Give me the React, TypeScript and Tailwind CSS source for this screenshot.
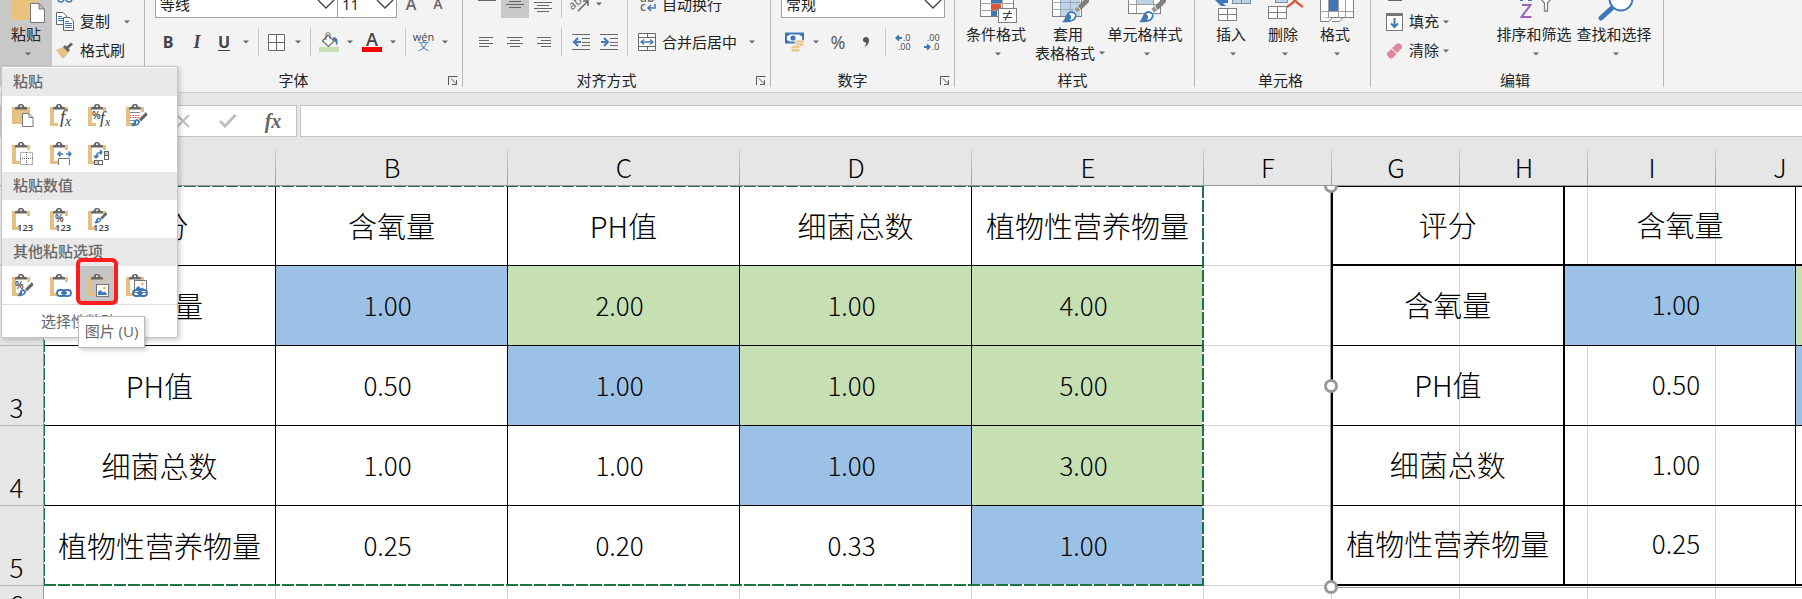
import type { ReactNode } from 'react';
import clsx from 'clsx';

type Fill = 'none' | 'blue' | 'green';

const fills: Record<Fill, string> = {
  none: '',
  blue: 'bg-[#9bc2e6]',
  green: 'bg-[#c6e0b4]',
};

const columns = ['A', 'B', 'C', 'D', 'E', 'F', 'G', 'H', 'I', 'J'];

const rows: { text: string; fill: Fill }[][] = [
  [
    { text: '评分', fill: 'none' },
    { text: '含氧量', fill: 'none' },
    { text: 'PH值', fill: 'none' },
    { text: '细菌总数', fill: 'none' },
    { text: '植物性营养物量', fill: 'none' },
  ],
  [
    { text: '含氧量', fill: 'none' },
    { text: '1.00', fill: 'blue' },
    { text: '2.00', fill: 'green' },
    { text: '1.00', fill: 'green' },
    { text: '4.00', fill: 'green' },
  ],
  [
    { text: 'PH值', fill: 'none' },
    { text: '0.50', fill: 'none' },
    { text: '1.00', fill: 'blue' },
    { text: '1.00', fill: 'green' },
    { text: '5.00', fill: 'green' },
  ],
  [
    { text: '细菌总数', fill: 'none' },
    { text: '1.00', fill: 'none' },
    { text: '1.00', fill: 'none' },
    { text: '1.00', fill: 'blue' },
    { text: '3.00', fill: 'green' },
  ],
  [
    { text: '植物性营养物量', fill: 'none' },
    { text: '0.25', fill: 'none' },
    { text: '0.20', fill: 'none' },
    { text: '0.33', fill: 'none' },
    { text: '1.00', fill: 'blue' },
  ],
];

const isNumber = (text: string) => /^\d/.test(text);

/* ---------- small shared pieces ---------- */

function Caret({ className }: { className?: string }) {
  return (
    <svg width="6" height="4" viewBox="0 0 6 4" className={clsx('shrink-0', className)}>
      <path d="M0 0.5H6L3 3.5Z" fill="#666" />
    </svg>
  );
}

function Sep({ className }: { className?: string }) {
  return <div className={clsx('w-px h-7 shrink-0 bg-[#c8c8c8]', className)}></div>;
}

function Tool({ label, className, children }: { label: string; className: string; children: ReactNode }) {
  return (
    <button aria-label={label} className={clsx('h-7 shrink-0 flex items-center justify-center', className)}>
      {children}
    </button>
  );
}

function Launcher() {
  return (
    <button aria-label="更多设置" className="shrink-0">
      <svg width="10" height="9" viewBox="0 0 10 9" fill="none" stroke="#555">
        <path d="M0.5 9V0.5H9.5M3 2.5L8 7.5M8.5 4V8.5H4" />
      </svg>
    </button>
  );
}

function Group({ label, launcher, className, children }: { label: string; launcher?: boolean; className: string; children: ReactNode }) {
  return (
    <section className={clsx('h-[87px] shrink-0 flex flex-col justify-between border-r border-[#b8b8b8]', className)}>
      {children}
      <div className="flex items-center pr-1 leading-3.5">
        <span className={clsx('flex-1 text-center', launcher && 'pr-1.5')}>{label}</span>
        {launcher && <Launcher />}
      </div>
    </section>
  );
}

function Combo({ label, value, className }: { label: string; value: string; className: string }) {
  return (
    <label className={clsx('relative block h-7 shrink-0', className)}>
      <select aria-label={label} className="w-full h-7 appearance-none bg-white border border-[#a0a0a0] pl-1 leading-6">
        <option>{value}</option>
      </select>
      <svg width="18" height="10" viewBox="0 0 18 10" fill="none" stroke="#444" strokeWidth="1.4" className="absolute right-[3px] top-[9px] pointer-events-none">
        <path d="M1 1L9 9L17 1" />
      </svg>
    </label>
  );
}

function BigButton({ icon, lines, className }: { icon: ReactNode; lines: string[]; className: string }) {
  return (
    <button className={clsx('h-[62px] shrink-0 flex flex-col items-center whitespace-nowrap', className)}>
      <span className="h-6 pl-1">{icon}</span>
      <span className="leading-5">{lines[0]}</span>
      {lines[1] ? (
        <span className="flex items-center gap-1 leading-4.5 pl-1">{lines[1]}<Caret /></span>
      ) : (
        <Caret className="mt-2 ml-1" />
      )}
    </button>
  );
}

/* ---------- ribbon icons ---------- */

function Lines({ rows: list, width = 18 }: { rows: [number, number, number][]; width?: number }) {
  return (
    <svg width={width} height="20" viewBox={`0 0 ${width} 20`} stroke="#666">
      {list.map(([x1, x2, y]) => <path key={y} d={`M${x1} ${y}.5H${x2}`} />)}
    </svg>
  );
}

function Brush({ transform }: { transform?: string }) {
  return (
    <g transform={transform}>
      <path d="M25 -3L16 6L19 10L29 0Z" fill="#7f7f7f" />
      <path d="M15 6L12 9L15 13L19 10Z" fill="#9a9a9a" stroke="#fff" strokeWidth="0.6" />
      <path d="M0 22C4 20 3 12 9 11C13 11 16 15 14 18C12 22 6 23 0 22Z" fill="#3f78b5" />
      <path d="M7 14C9 12 12 13 13 15C13 18 10 20 8 20C10 17 9 15 7 14Z" fill="#fff" />
    </g>
  );
}

function SmallBrush({ transform }: { transform: string }) {
  return (
    <g transform={transform}>
      <path d="M15 0L8 7L10 9.500L16.500 3Z" fill="#666" />
      <path d="M0 14C3 12 2 8 6 7C9 8 10 10 8 12C6 14 3 14.500 0 14Z" fill="#3f78b5" />
      <path d="M5 9L7 9.500L6.500 11.500L5 12Z" fill="#fff" />
    </g>
  );
}

function ConditionalIcon() {
  return (
    <svg width="37" height="23" viewBox="0 0 37 23">
      <rect x="0.5" y="-4" width="33" height="20.5" fill="#fff" stroke="#7f7f7f" />
      <path d="M0 3.5H33M0 10.5H33M11.5 0V16M22.5 0V16" stroke="#a0a0a0" />
      <rect x="11" y="0" width="11" height="3" fill="#3f78b5" />
      <rect x="11" y="4" width="10" height="6" fill="#d9593a" />
      <rect x="11" y="11" width="6" height="5" fill="#3f78b5" />
      <rect x="18.500" y="8.500" width="18" height="14" fill="#fff" stroke="#7f7f7f" />
      <path d="M23 13.500H32M23 17.500H32M30 10.500L25 20.500" stroke="#444" strokeWidth="1.200" />
    </svg>
  );
}

function TableStyleIcon() {
  return (
    <svg width="37" height="23" viewBox="0 0 37 23">
      <rect x="0.5" y="-4" width="29" height="20.500" fill="#fff" stroke="#7f7f7f" />
      <rect x="9" y="0" width="19" height="16" fill="#bcd3e8" />
      <path d="M0 2.500H29M0 9.500H29M8.500 0V16M18.500 0V16" stroke="#9aa9b8" />
      <Brush transform="translate(10 0)" />
    </svg>
  );
}

function CellStyleIcon() {
  return (
    <svg width="38" height="23" viewBox="0 0 38 23">
      <rect x="0.5" y="-4" width="32" height="17.500" fill="#fff" stroke="#7f7f7f" />
      <path d="M0 4.500H32M8.500 0V13M25.500 0V13" stroke="#a0a0a0" />
      <rect x="9" y="0" width="16" height="4" fill="#bcd3e8" />
      <Brush transform="translate(11 0)" />
    </svg>
  );
}

function InsertIcon() {
  return (
    <svg width="37" height="21" viewBox="0 0 37 21">
      <path d="M0 0H13V3H8L11 6H6Z" fill="#3f78b5" />
      <rect x="17.500" y="-4" width="18" height="7.500" fill="#bcd3e8" stroke="#7f8f9f" />
      <path d="M26.500 0V3" stroke="#7f8f9f" />
      <rect x="3.500" y="8.500" width="18" height="12" fill="#fff" stroke="#7f7f7f" />
      <path d="M12.500 8V20M3 14.500H22" stroke="#7f7f7f" />
    </svg>
  );
}

function DeleteIcon() {
  return (
    <svg width="37" height="21" viewBox="0 0 37 21">
      <rect x="8.500" y="-4" width="12" height="6.500" fill="#bcd3e8" stroke="#7f8f9f" />
      <path d="M20 7C25 4 29 0 32 -4M24 -4C27 0 31 4 36 7" fill="none" stroke="#d9593a" strokeWidth="2.400" />
      <rect x="1.500" y="6.500" width="18" height="12" fill="#fff" stroke="#7f7f7f" />
      <path d="M10.500 6V18M1 12.500H20" stroke="#7f7f7f" />
    </svg>
  );
}

function FormatIcon() {
  return (
    <svg width="36" height="22" viewBox="0 0 36 22">
      <rect x="1.500" y="-4" width="33" height="21.500" fill="#fff" stroke="#7f7f7f" />
      <path d="M1 11.500H34M9.500 0V17M19.500 0V17M26.500 0V17" stroke="#a0a0a0" />
      <rect x="10" y="0" width="9" height="11" fill="#3f78b5" />
      <path d="M1.500 17V21.500H10L13 18M13 21.500H20L24 18" fill="#fff" stroke="#7f7f7f" />
    </svg>
  );
}

function SortIcon() {
  return (
    <svg width="32" height="20" viewBox="0 0 32 20" fill="none">
      <path d="M0 0H3M8 0H12" stroke="#3f78b5" strokeWidth="2" />
      <path d="M2 5H10.500L1.500 17H11.500" stroke="#9a63b8" strokeWidth="2" />
      <path d="M21 -1L24.500 3V11H27.500V3L31 -1" fill="#fff" stroke="#7f7f7f" strokeWidth="1.300" />
    </svg>
  );
}

function FindIcon() {
  return (
    <svg width="36" height="21" viewBox="0 0 36 21" fill="none" stroke="#3f78b5">
      <path d="M3 18L14 8" strokeWidth="5" strokeLinecap="round" />
      <circle cx="23" cy="-1" r="11.500" fill="#fff" strokeWidth="2" />
    </svg>
  );
}

function MoneyIcon() {
  return (
    <svg width="20" height="20" viewBox="0 0 20 20">
      <rect x="0" y="0.5" width="19" height="11" fill="#3f78b5" />
      <path d="M2 4.500L5 2.500H14L17 4.500V8L14 9.500H5L2 8Z" fill="#fff" />
      <circle cx="8" cy="6" r="2.600" fill="#3f78b5" />
      <g fill="#ebc88e" stroke="#f3f3f3" strokeWidth="0.8">
        <rect x="10" y="8" width="9" height="3.500" rx="1.500" />
        <rect x="10" y="11" width="9" height="3.500" rx="1.500" />
        <rect x="6" y="13.500" width="9" height="3.500" rx="1.500" />
        <rect x="6" y="16.500" width="9" height="3.500" rx="1.500" />
      </g>
    </svg>
  );
}

function Arrow({ d }: { d: string }) {
  return <path d={d} fill="none" stroke="#3f78b5" strokeWidth="2" />;
}

/* ---------- paste gallery icons ---------- */

function Board({ solid, children }: { solid?: boolean; children?: ReactNode }) {
  return (
    <svg width="22" height="24" viewBox="0 0 22 24" className="mt-px">
      {solid ? (
        <path d="M0 3H18V9H10V20H0Z" fill="#e6bf82" />
      ) : (
        <path d="M0 3H4V19H8V22H0ZM14 3H18V8H15V5H14Z" fill="#e6bf82" />
      )}
      <path d="M3 5.500V3.500L6 2.500C6 0.5 7.500 0 9 0S12 0.5 12 2.500L15 3.500V5.500Z" fill="#666" />
      <circle cx="9" cy="2.200" r="1" fill="#fff" />
      {children}
    </svg>
  );
}

function Num() {
  return <text x="5" y="23" fontSize="9.500" fontFamily="Open Sans" fontWeight="600" fill="#444">123</text>;
}

function Percent({ x = 5, y = 14 }: { x?: number; y?: number }) {
  return <text x={x} y={y} fontSize="10" fontFamily="Open Sans" fontWeight="600" fill="#444">%</text>;
}

function Fx({ x = 10, size = 17 }: { x?: number; size?: number }) {
  return (
    <g fontFamily="Liberation Serif" fontStyle="italic" fill="#444">
      <text x={x} y="19" fontSize={size + 2}>f</text>
      <text x={x + 5} y="22" fontSize={size - 3}>x</text>
    </g>
  );
}

function Chain({ y = 19 }: { y?: number }) {
  return (
    <g fill="none" stroke="#3f78b5" strokeWidth="1.800" transform={`translate(0 ${y})`}>
      <rect x="7" y="-3" width="8" height="6" rx="3" />
      <rect x="13" y="-3" width="8" height="6" rx="3" />
      <path d="M11 0H17" />
    </g>
  );
}

function Picture({ y = 10 }: { y?: number }) {
  return (
    <g transform={`translate(0 ${y})`}>
      <rect x="8.500" y="0.5" width="12" height="12" fill="#fff" stroke="#777" />
      <path d="M10 11V8L12.500 6L15 8.500L16.500 7.500L19 10V11Z" fill="#3f78b5" />
      <circle cx="16.500" cy="4" r="1.200" fill="#e6a85a" />
    </g>
  );
}

const pasteGallery: { title: string; items: { name: string; icon: ReactNode; active?: boolean }[] }[] = [
  {
    title: '粘贴',
    items: [
      {
        name: '粘贴',
        icon: (
          <Board solid>
            <path d="M10.500 9.500H17L21 13.500V22.500H10.500ZM17 9.500V13.500H21" fill="#fff" stroke="#777" />
          </Board>
        ),
      },
      { name: '公式', icon: <Board><Fx /></Board> },
      { name: '公式和数字格式', icon: <Board><Percent x={4} y={15} /><Fx x={12} size={15} /></Board> },
      {
        name: '保留源格式',
        icon: (
          <Board>
            <path d="M4 8.500H14M4 16.500H12M4 19.500H9" stroke="#888" />
            <path d="M4 11.500H14M4 13.500H14" stroke="#d9593a" strokeDasharray="1.500 1" />
            <SmallBrush transform="translate(5 8)" />
          </Board>
        ),
      },
      {
        name: '无边框',
        icon: (
          <Board>
            <path d="M8.500 10.500H20.500V22.500H8.500ZM14.500 10V23M8 16.500H21" fill="none" stroke="#666" strokeDasharray="1 1" />
          </Board>
        ),
      },
      {
        name: '保留源列宽',
        icon: (
          <Board>
            <path d="M8.500 23V16.500H19.500V23" fill="#fff" stroke="#777" />
            <path d="M8 12H13M16 12H21M10.500 9.500L8 12L10.500 14.500M18.500 9.500L21 12L18.500 14.500" fill="none" stroke="#3f78b5" strokeWidth="1.500" />
          </Board>
        ),
      },
      {
        name: '转置',
        icon: (
          <Board>
            <rect x="16.500" y="9.500" width="4" height="8" fill="#fff" stroke="#666" />
            <rect x="16.500" y="9.500" width="4" height="4" fill="#ccc" stroke="#666" />
            <rect x="6.500" y="18.500" width="8" height="4" fill="#fff" stroke="#666" />
            <rect x="6.500" y="18.500" width="4" height="4" fill="#ccc" stroke="#666" />
            <path d="M8 16C8 12 10 10 14 10M6 13.500L8 16L10.500 13.500M12 8L14 10L12 12.500" fill="none" stroke="#3f78b5" strokeWidth="1.500" />
          </Board>
        ),
      },
    ],
  },
  {
    title: '粘贴数值',
    items: [
      { name: '值', icon: <Board><Num /></Board> },
      { name: '值和数字格式', icon: <Board><Percent /><Num /></Board> },
      { name: '值和源格式', icon: <Board><SmallBrush transform="translate(6 4) scale(0.8)" /><Num /></Board> },
    ],
  },
  {
    title: '其他粘贴选项',
    items: [
      { name: '格式', icon: <Board><Percent x={3} y={15} /><SmallBrush transform="translate(5 8)" /></Board> },
      { name: '粘贴链接', icon: <Board><Chain /></Board> },
      { name: '图片', icon: <Board><Picture /></Board>, active: true },
      { name: '链接的图片', icon: <Board><Picture y={6} /><Chain /></Board> },
    ],
  },
];

/* ---------- ribbon ---------- */

function Ribbon() {
  return (
    <header className="h-[93px] shrink-0 flex overflow-hidden bg-[#f3f3f3] border-b border-[#d0d0d0]">
      <section className="h-[87px] w-[145px] shrink-0 flex border-r border-[#b8b8b8]">
        <div className="w-[52px] bg-[#c8c8c8]">
          <BigButton
            className="w-[52px]"
            lines={['粘贴']}
            icon={
              <svg width="34" height="23" viewBox="0 0 34 23">
                <path d="M0 0H27V3H18V20H0Z" fill="#e9c27d" />
                <path d="M19.500 3.500H28L33.500 9V22.500H19.500ZM28 3.500V9H33.500" fill="#fff" stroke="#777" />
              </svg>
            }
          />
        </div>
        <div className="flex flex-col pl-1">
          <svg width="18" height="3" viewBox="0 0 18 3" fill="none" stroke="#3f78b5" strokeWidth="1.500" className="mb-1">
            <circle cx="5" cy="-1" r="3" />
            <circle cx="13" cy="-1" r="3" />
          </svg>
          <button className="h-[29px] flex items-center gap-1.5">
            <svg width="18" height="19" viewBox="0 0 18 19" fill="#fff" stroke="#666">
              <path d="M0.5 0.5H7L10.500 4V12.500H0.500Z" />
              <path d="M2 4.500H6M2 6.500H7M2 8.500H7" stroke="#3f78b5" />
              <path d="M7.500 5.500H14L17.500 9V18.500H7.500Z" />
              <path d="M9 9.500H13M9 11.500H16M9 13.500H16M9 15.500H16" stroke="#3f78b5" />
            </svg>
            复制
            <Caret className="ml-2" />
          </button>
          <button className="h-[29px] flex items-center gap-1.5">
            <svg width="18" height="18" viewBox="0 0 18 18">
              <path d="M0 8L7 5L13 10L7 17Z" fill="#e6bf82" />
              <path d="M7 5L9 3L14 8L12 10Z" fill="#666" />
              <path d="M11 6L16 1.500" stroke="#666" strokeWidth="3" />
            </svg>
            格式刷
          </button>
        </div>
      </section>

      <Group label="字体" launcher className="w-[318px]">
        <div className="h-14 flex flex-col justify-end gap-2.5">
          <div className="flex h-7 shrink-0 items-center pl-2.5">
            <Combo label="字体" value="等线" className="w-[183px]" />
            <Combo label="字号" value="11" className="w-[60px] -ml-px" />
            <button aria-label="增大字号" className="w-[28px] h-7 text-base leading-6 font-semibold text-[#666]">A</button>
            <button aria-label="减小字号" className="w-[26px] h-7 text-sm leading-6 font-semibold text-[#666]">A</button>
          </div>
          <div className="flex h-7 shrink-0 items-center pl-2 text-base text-[#444]">
            <Tool label="加粗" className="w-[30px] font-bold">B</Tool>
            <Tool label="倾斜" className="w-[28px] font-bold italic font-['Liberation_Serif',serif] text-lg">I</Tool>
            <Tool label="下划线" className="w-[26px] font-bold underline underline-offset-2">U</Tool>
            <Tool label="下划线样式" className="w-[18px]"><Caret /></Tool>
            <Sep className="ml-[3px]" />
            <Tool label="边框" className="w-[34px]">
              <svg width="17" height="17" viewBox="0 0 17 17" fill="#fff" stroke="#666">
                <path d="M0.500 0.500H16.500V16.500H0.500ZM8.500 0V17M0 8.500H17" />
              </svg>
            </Tool>
            <Tool label="边框样式" className="w-2.5"><Caret /></Tool>
            <Sep className="ml-[7px]" />
            <Tool label="填充颜色" className="w-[36px]">
              <svg width="20" height="20" viewBox="0 0 20 20" fill="none" stroke="#666">
                <path d="M9 3L3.500 9L9.500 14.500L15 9Z" fill="#fff" strokeWidth="1.200" />
                <path d="M7 8V2.500C7 0 11 0 11 2.500V7" />
                <path d="M14 5C18 5 19.500 8 18 14C17 11 16.500 9 14 8Z" fill="#3f78b5" stroke="none" />
                <rect x="0" y="15" width="20" height="5" fill="#c6e0b4" stroke="none" />
              </svg>
            </Tool>
            <Tool label="填充颜色选项" className="w-1.5"><Caret /></Tool>
            <Tool label="字体颜色" className="w-[38px]">
              <span className="w-5 h-5 border-b-[5px] border-[#f00] text-lg leading-3.5 font-semibold">A</span>
            </Tool>
            <Tool label="字体颜色选项" className="w-1"><Caret /></Tool>
            <Sep className="ml-2.5" />
            <Tool label="拼音" className="w-[35px]">
              <span className="flex flex-col text-[11px] leading-2.5">
                <span className="leading-2">wén</span>
                <span className="text-[#3f78b5]">文</span>
              </span>
            </Tool>
            <Tool label="拼音选项" className="w-2"><Caret /></Tool>
          </div>
        </div>
      </Group>

      <Group label="对齐方式" launcher className="w-[308px]">
        <div className="h-14 flex pl-2.5">
          <div className="flex flex-col justify-end gap-2.5">
            <div className="flex h-7 shrink-0 items-center">
              <Tool label="顶端对齐" className="w-[28px]"><Lines rows={[[0, 18, 6]]} /></Tool>
              <Tool label="垂直居中" className="w-[28px] bg-[#c8c8c8]"><Lines rows={[[3, 15, 7], [0, 18, 10], [3, 15, 13]]} /></Tool>
              <Tool label="底端对齐" className="w-[28px]"><Lines rows={[[0, 18, 8], [3, 15, 11], [0, 18, 14], [3, 15, 17]]} /></Tool>
            </div>
            <div className="flex h-7 shrink-0 items-center">
              <Tool label="左对齐" className="w-[28px]"><Lines width={16} rows={[[0, 14, 5], [0, 10, 8], [0, 14, 11], [0, 10, 14]]} /></Tool>
              <Tool label="居中" className="w-[28px]"><Lines width={16} rows={[[0, 16, 5], [3, 13, 8], [0, 16, 11], [3, 13, 14]]} /></Tool>
              <Tool label="右对齐" className="w-[28px]"><Lines width={16} rows={[[2, 16, 5], [6, 16, 8], [2, 16, 11], [6, 16, 14]]} /></Tool>
            </div>
          </div>
          <div className="flex flex-col justify-end gap-2.5 ml-1">
            <Sep />
            <Sep />
          </div>
          <div className="w-[65px] flex flex-col justify-end gap-2.5">
            <div className="flex h-7 shrink-0 items-center pl-2">
              <Tool label="方向" className="w-[20px]">
                <svg width="20" height="20" viewBox="0 0 20 20" fill="none" stroke="#666">
                  <text x="0" y="13" fontSize="12" fontFamily="Open Sans" fill="#666" stroke="none" transform="rotate(-40 6 12)">ab</text>
                  <path d="M8 17L18 7M13 7H18V12" strokeWidth="1.500" />
                </svg>
              </Tool>
              <Caret className="ml-1.5" />
            </div>
            <div className="flex h-7 shrink-0 items-center gap-2.5 pl-2.5">
              {['M6 5L2 9L6 13M2 9H9', 'M4 5L8 9L4 13M1 9H8'].map((d, i) => (
                <Tool key={d} label={i ? '增加缩进' : '减少缩进'} className="w-[18px]">
                  <svg width="18" height="18" viewBox="0 0 18 18" stroke="#666">
                    <path d="M0 1.500H18M10 5.500H18M10 9.500H18M10 12.500H18M0 16.500H18" />
                    <Arrow d={d} />
                  </svg>
                </Tool>
              ))}
            </div>
          </div>
          <Sep className="h-14" />
          <div className="flex flex-col justify-end gap-2.5 pl-2.5">
            <button className="flex h-7 shrink-0 items-center gap-1.5">
              <svg width="18" height="20" viewBox="0 0 18 20" fill="none">
                <text x="2" y="8" fontSize="12" fontFamily="Open Sans" fontWeight="600" fill="#666">ab</text>
                <text x="2" y="17" fontSize="12" fontFamily="Open Sans" fontWeight="600" fill="#666">c</text>
                <path d="M17 10V14H10M13 11L10 14L13 17" stroke="#3f78b5" strokeWidth="1.500" />
              </svg>
              自动换行
            </button>
            <button className="flex h-7 shrink-0 items-center">
              <svg width="18" height="18" viewBox="0 0 18 18" fill="#fff" stroke="#666">
                <path d="M0.500 0.500H17.500V17.500H0.500ZM0 4.500H18M0 13.500H18M9.500 0V4M9.500 14V18" />
                <path d="M3 9H15M6 6.500L3 9L6 11.500M12 6.500L15 9L12 11.500" fill="none" stroke="#3f78b5" strokeWidth="1.300" />
              </svg>
              <span className="pl-1.5 pr-3">合并后居中</span>
              <Caret />
            </button>
          </div>
        </div>
      </Group>

      <Group label="数字" launcher className="w-[184px]">
        <div className="h-14 flex flex-col justify-end gap-2.5">
          <div className="flex h-7 shrink-0 pl-2.5">
            <Combo label="数字格式" value="常规" className="w-[164px]" />
          </div>
          <div className="flex h-7 shrink-0 items-center text-[#555]">
            <Tool label="会计数字格式" className="w-[38px] pl-2.5"><MoneyIcon /></Tool>
            <Tool label="货币选项" className="w-[14px]"><Caret /></Tool>
            <Tool label="百分比" className="w-[30px] text-lg">%</Tool>
            <Tool label="千位分隔" className="w-[26px]">
              <svg width="6" height="10" viewBox="0 0 6 10" fill="#555">
                <path d="M3 0C5 0 6 1.500 6 3.500C6 6.500 4 9 1 10C2.500 8.500 3.300 7 3.200 5.500C1.200 5.800 0 4.500 0 3C0 1.200 1.200 0 3 0Z" />
              </svg>
            </Tool>
            <Sep className="ml-1.5" />
            <Tool label="增加小数位数" className="w-[36px]">
              <svg width="18" height="18" viewBox="0 0 18 18" fontFamily="Open Sans" fontSize="9" fill="#444">
                <text x="8" y="8">.0</text>
                <text x="3" y="17">.00</text>
                <Arrow d="M4 2.500L1.500 5L4 7.500M1 5H7" />
              </svg>
            </Tool>
            <Tool label="减少小数位数" className="w-[20px]">
              <svg width="18" height="18" viewBox="0 0 18 18" fontFamily="Open Sans" fontSize="9" fill="#444">
                <text x="4" y="8">.00</text>
                <text x="9" y="17">.0</text>
                <Arrow d="M4 11.500L6.500 14L4 16.500M1 14H6" />
              </svg>
            </Tool>
          </div>
        </div>
      </Group>

      <Group label="样式" className="w-[240px]">
        <div className="flex pl-1.5">
          <BigButton className="w-[70px]" lines={['条件格式']} icon={<ConditionalIcon />} />
          <BigButton className="w-[74px]" lines={['套用', '表格格式']} icon={<TableStyleIcon />} />
          <BigButton className="w-[80px]" lines={['单元格样式']} icon={<CellStyleIcon />} />
        </div>
      </Group>

      <Group label="单元格" className="w-[176px]">
        <div className="flex pl-2.5">
          <BigButton className="w-[52px]" lines={['插入']} icon={<InsertIcon />} />
          <BigButton className="w-[52px]" lines={['删除']} icon={<DeleteIcon />} />
          <BigButton className="w-[52px]" lines={['格式']} icon={<FormatIcon />} />
        </div>
      </Group>

      <Group label="编辑" className="w-[293px]">
        <div className="flex pl-[15px]">
          <div className="flex flex-col w-[106px]">
            <div className="h-[7px] pl-0.5">
              <div className="w-3.5 h-px bg-[#666]"></div>
            </div>
            <button className="h-[29px] flex items-center">
              <svg width="17" height="18" viewBox="0 0 17 18" fill="#fff" stroke="#777">
                <rect x="0.500" y="0.500" width="16" height="17" />
                <path d="M0 1.500H17" strokeWidth="3" />
                <path d="M8.500 5V14M5 10.500L8.500 14L12 10.500" fill="none" stroke="#3f78b5" strokeWidth="2" />
              </svg>
              <span className="pl-1.5 pr-1">填充</span>
              <Caret />
            </button>
            <button className="h-[29px] flex items-center">
              <svg width="17" height="16" viewBox="0 0 17 16">
                <path d="M6 5L11 0.500H14L16 3V5L11 10Z" fill="#e2849b" />
                <path d="M5.500 6L10.500 11L6 15.500H4L1 12V10Z" fill="#e2849b" />
              </svg>
              <span className="pl-1.5 pr-1">清除</span>
              <Caret />
            </button>
          </div>
          <BigButton className="w-[84px]" lines={['排序和筛选']} icon={<SortIcon />} />
          <BigButton className="w-[76px]" lines={['查找和选择']} icon={<FindIcon />} />
        </div>
      </Group>
    </header>
  );
}

function FormulaBar() {
  return (
    <div className="h-11 shrink-0 flex gap-[3px] pt-3">
      <div className="w-[297px] h-8 shrink-0 flex items-center justify-end border border-[#c3c3c3] bg-white">
        <Tool label="取消" className="w-[45px]">
          <svg width="14" height="14" viewBox="0 0 14 14" stroke="#bdbdbd" strokeWidth="2">
            <path d="M1 1L13 13M13 1L1 13" />
          </svg>
        </Tool>
        <Tool label="输入" className="w-[45px]">
          <svg width="18" height="14" viewBox="0 0 18 14" fill="none" stroke="#bdbdbd" strokeWidth="3">
            <path d="M1 7L6 12L16.500 1" />
          </svg>
        </Tool>
        <Tool label="插入函数" className="w-[46px] font-['Liberation_Serif',serif] italic font-bold text-xl text-[#666]">
          fx
        </Tool>
      </div>
      <input aria-label="编辑栏" className="flex-1 min-w-0 h-8 border border-r-0 border-[#c3c3c3] bg-white px-2" />
    </div>
  );
}

/* ---------- paste menu ---------- */

function PasteMenu() {
  return (
    <div className="absolute left-px top-[66px] w-[177px] z-20 bg-white border border-[#c6c6c6] pt-px shadow-[2px_2px_5px_rgba(0,0,0,0.2)]">
      {pasteGallery.map((group) => (
        <div key={group.title}>
          <h3 className="h-7 pl-[11px] leading-6.5 font-medium text-[#666] bg-[#e9e9e9]">{group.title}</h3>
          <div className="grid grid-cols-[repeat(4,38px)] pl-0.5">
            {group.items.map((item) => (
              <button key={item.name} aria-label={item.name} className={clsx('relative h-[38px] grid place-items-center', item.active && 'bg-[#c5c5c5]')}>
                {item.icon}
                {item.active && <span className="absolute -left-1 -top-2 w-[42px] h-[47px] border-4 border-[#fb1e1c] rounded-md"></span>}
              </button>
            ))}
          </div>
        </div>
      ))}
      <button className="w-full h-[33px] border-t border-[#dcdcdc] pl-[39px] text-left text-[#666]">选择性粘贴(S)...</button>
      <div role="tooltip" className="absolute left-[76px] top-[249px] w-[67px] h-8 border border-[#bbb] bg-white text-center leading-7 text-[#666] whitespace-nowrap shadow-[2px_2px_4px_rgba(0,0,0,0.2)]">
        图片 (U)
      </div>
    </div>
  );
}

/* ---------- sheet ---------- */

function Handle({ className }: { className: string }) {
  return <span className={clsx('absolute -left-[7px] size-3.5 rounded-full border-[3px] border-[#999] bg-white', className)}></span>;
}

// Picture pasted next to the source range, with its selection frame
function PastedPicture() {
  return (
    <div className="absolute left-[1330px] top-0 border-l border-b border-[#999] pb-px">
      <table className="table-fixed w-[697px] border-separate border-spacing-0 border-l-2 border-black text-[29px] leading-8">
        <tbody>
          {rows.map((row, r) => (
            <tr key={r}>
              {row.slice(0, 3).map((cell, c) => (
                <td
                  key={c}
                  className={clsx(
                    'h-20 p-0 pb-1 text-center border-black whitespace-nowrap',
                    r === 0 && 'border-t',
                    r === 0 || r === 4 ? 'border-b-2' : 'border-b',
                    c === 0 ? 'border-r-2' : 'border-r',
                    fills[cell.fill],
                    isNumber(cell.text) && 'pr-2 text-[26px]',
                  )}
                >
                  {c < 2 && cell.text}
                </td>
              ))}
            </tr>
          ))}
        </tbody>
      </table>
      <Handle className="-top-[7px]" />
      <Handle className="top-[193px]" />
      <Handle className="-bottom-[7px]" />
    </div>
  );
}

function Sheet() {
  const headTick = 'bg-[linear-gradient(to_bottom,#d8d8d8,#9b9b9b)] bg-[length:1px_38px] bg-right-bottom bg-no-repeat';

  return (
    <div className="relative flex-1 overflow-hidden bg-white font-['Noto_Sans_CJK_SC',sans-serif] font-light text-black">
      <table className="table-fixed w-full border-separate border-spacing-0 text-[29px] leading-8">
        <colgroup>
          <col className="w-11" />
          {columns.map((name, i) => <col key={name} className={i < 5 ? 'w-[232px]' : 'w-32'} />)}
          <col />
        </colgroup>
        <thead>
          <tr className="h-[49px] bg-[#e6e6e6] text-[26px]">
            <td className="border-b border-[#9b9b9b]"></td>
            {columns.map((name) => (
              <th key={name} scope="col" className={clsx('p-0 pt-3 font-light border-b border-[#9b9b9b]', headTick)}>{name}</th>
            ))}
            <td className="border-b border-[#9b9b9b]"></td>
          </tr>
        </thead>
        <tbody>
          {rows.map((row, r) => (
            <tr key={r} className="h-20">
              <th scope="row" className="p-0 pr-2.5 pb-0.5 align-bottom font-light text-[26px] bg-[#e6e6e6] border-r border-b border-r-[#9b9b9b] border-b-[#b5b5b5]">{r + 1}</th>
              {columns.map((name, c) => {
                const cell = row[c];
                return cell ? (
                  <td key={name} className={clsx('p-0 pb-0.5 text-center whitespace-nowrap border-r border-b border-black', fills[cell.fill], isNumber(cell.text) && 'pr-2 text-[26px]')}>
                    {cell.text}
                  </td>
                ) : (
                  <td key={name} className="border-r border-b border-[#d4d4d4]"></td>
                );
              })}
              <td className="border-b border-[#d4d4d4]"></td>
            </tr>
          ))}
          <tr className="h-9">
            <th scope="row" className="p-0 pr-2.5 pb-0.5 align-bottom font-light text-[26px] bg-[#e6e6e6] border-r border-[#9b9b9b]">6</th>
            {columns.map((name) => <td key={name} className="border-r border-[#d4d4d4]"></td>)}
            <td></td>
          </tr>
        </tbody>
      </table>

      <div className="absolute inset-x-0 top-[49px] bottom-0 overflow-hidden">
        {/* Copied range outline */}
        <div className="absolute left-11 top-0 w-[1160px] h-[400px]">
          <div className="absolute inset-x-0 top-0 h-px bg-[repeating-linear-gradient(90deg,#217346_0_12px,#fff_12px_14px)]"></div>
          <div className="absolute inset-x-0 bottom-0 h-0.5 bg-[repeating-linear-gradient(90deg,#217346_0_12px,#fff_12px_14px)]"></div>
          <div className="absolute inset-y-0 left-0 w-px bg-[repeating-linear-gradient(#217346_0_12px,#fff_12px_14px)]"></div>
          <div className="absolute inset-y-0 right-0 w-0.5 bg-[repeating-linear-gradient(#217346_0_12px,#fff_12px_14px)]"></div>
        </div>
        <PastedPicture />
      </div>
    </div>
  );
}

export default function App() {
  return (
    <div className="relative h-screen flex flex-col overflow-hidden bg-[#e6e6e6] font-['Open_Sans','Noto_Sans_CJK_SC',sans-serif] text-[15px] text-[#222]">
      <Ribbon />
      <FormulaBar />
      <Sheet />
      <PasteMenu />
    </div>
  );
}
